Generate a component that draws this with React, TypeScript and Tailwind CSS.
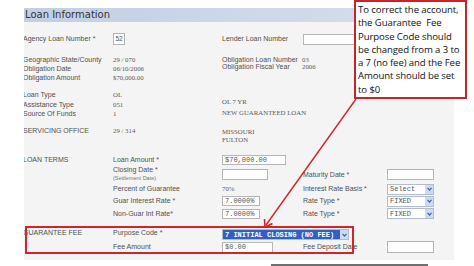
import React from "react"

// column widths, measured from the panel's left edge (x=24)
const C1 = "w-[89px] shrink-0 flex items-center"
const C2 = "w-[109px] shrink-0 flex items-center"
const C3 = "w-[80px] shrink-0 flex items-center"
const C4 = "w-[85px] shrink-0 flex items-center"

function Label({ children, className = "" }: { children: React.ReactNode; className?: string }) {
  return <span className={`text-[7px] leading-[8px] text-[#505050] whitespace-nowrap ${className}`}>{children}</span>
}

function Value({ children }: { children: React.ReactNode }) {
  return (
    <span className="font-['Liberation_Serif',serif] text-[6.8px] leading-[8px] text-[#5a5a5a] whitespace-nowrap">
      {children}
    </span>
  )
}

function Input({ value = "", w, h = "h-[11px]" }: { value?: string; w: string; h?: string }) {
  return (
    <div className={`${w} ${h} flex items-center border border-[#b5b5b5] bg-white px-[2px] font-['Liberation_Mono',monospace] text-[7px] text-[#555] whitespace-nowrap`}>
      {value}
    </div>
  )
}

function Select({ value, w, active = false }: { value: string; w: string; active?: boolean }) {
  return (
    <div className={`${w} h-[11px] flex border border-[#b3bccb] bg-white`}>
      <div
        className={`flex-1 flex items-center px-[2px] font-['Liberation_Mono',monospace] text-[7px] whitespace-nowrap overflow-hidden ${
          active ? "bg-[#3160c4] text-white font-bold" : "text-[#555]"
        }`}
      >
        {value}
      </div>
      <div className="w-[8px] flex items-center justify-center bg-[#cddbf2]">
        <svg width="5" height="4" viewBox="0 0 5 4">
          <path d="M0.5 0.8 L2.5 3 L4.5 0.8" fill="none" stroke="#3d64ad" strokeWidth="1.2" />
        </svg>
      </div>
    </div>
  )
}

export default function App() {
  return (
    <div className="relative w-[474px] h-[266px] overflow-hidden bg-white font-['Liberation_Sans',Arial,sans-serif] text-[7px] leading-[8px]">
      <div className="ml-[24px] mt-[8px] w-[430px] h-[252px] overflow-hidden bg-[#f4f4f4]">
        {/* header band */}
        <div className="h-[14px] flex items-center bg-gradient-to-r from-[#c2cfe3] to-[#d7e0ed] pl-[1px]">
          <span className="font-['DejaVu_Sans',sans-serif] text-[10px] leading-[12px] text-[#333]">Loan Information</span>
        </div>

        {/* agency / lender */}
        <div className="mt-[11px] h-[12px] flex items-center">
          <div className={C1}><Label className="-ml-px">Agency Loan Number *</Label></div>
          <div className={C2}>
            <div className="w-[12px] h-[12px] flex items-center justify-center border border-[#b5b5b5] bg-white text-[6.5px] text-[#555]">52</div>
          </div>
          <div className={C3}><Label>Lender Loan Number</Label></div>
          <div className="pl-px"><Input w="w-[90px]" /></div>
        </div>

        {/* geographic */}
        <div className="mt-[10px] flex">
          <div className="flex flex-col">
            {[
              ["Geographic State/County", "29 / 070"],
              ["Obligation Date", "06/10/2006"],
              ["Obligation Amount", "$70,000.00"],
            ].map(([l, v]) => (
              <div key={l} className="h-[9px] flex items-center">
                <div className={C1}><Label className="-ml-px">{l}</Label></div>
                <div className={C2}><Value>{v}</Value></div>
              </div>
            ))}
          </div>
          <div className="flex flex-col pt-px">
            {[
              ["Obligation Loan Number", "03"],
              ["Obligation Fiscal Year", "2006"],
            ].map(([l, v]) => (
              <div key={l} className="h-[7.5px] flex items-center">
                <div className={C3}><Label>{l}</Label></div>
                <Value>{v}</Value>
              </div>
            ))}
          </div>
        </div>

        {/* loan type */}
        <div className="mt-[8px] flex">
          <div className="flex flex-col">
            {[
              ["Loan Type", "OL"],
              ["Assistance Type", "051"],
              ["Source Of Funds", "1"],
            ].map(([l, v], i) => (
              <div key={l} className={`${i === 0 ? "h-[10px]" : "h-[9.5px]"} flex items-center`}>
                <div className={C1}><Label className="-ml-px">{l}</Label></div>
                <div className={C2}><Value>{v}</Value></div>
              </div>
            ))}
          </div>
          <div className="flex flex-col pt-[8px] gap-[3px]">
            <Value>OL 7 YR</Value>
            <Value>NEW GUARANTEED LOAN</Value>
          </div>
        </div>

        {/* servicing office */}
        <div className="mt-[8px] h-[17px] flex items-start">
          <div className={C1}><Label className="-ml-px">SERVICING OFFICE</Label></div>
          <div className={C2}><Value>29 / 314</Value></div>
          <div className="flex flex-col pt-px">
            <Value>MISSOURI</Value>
            <Value>FULTON</Value>
          </div>
        </div>

        {/* loan terms */}
        <div className="mt-[11px] h-[10px] flex items-center">
          <div className={C1}><Label className="-ml-px">LOAN TERMS</Label></div>
          <div className={C2}><Label>Loan Amount *</Label></div>
          <Input value="$70,000.00" w="w-[64px]" h="h-[10px]" />
        </div>

        <div className="mt-px h-[17px] flex items-center">
          <div className={C1} />
          <div className="w-[109px] shrink-0 self-start flex flex-col">
            <Label>Closing Date *</Label>
            <span className="text-[5.5px] leading-[8px] text-[#777] whitespace-nowrap">(Settlement Date)</span>
          </div>
          <div className={C3}><Input w="w-[46px]" /></div>
          <div className={C4}><Label className="pl-px">Maturity Date *</Label></div>
          <Input w="w-[47px]" />
        </div>

        <div className="mt-px h-[10px] flex items-center">
          <div className={C1} />
          <div className={C2}><Label>Percent of Guarantee</Label></div>
          <div className={C3}><Value>70%</Value></div>
          <div className={C4}><Label className="pl-px">Interest Rate Basis *</Label></div>
          <Select value="Select" w="w-[47px]" />
        </div>

        <div className="mt-px h-[12px] flex items-center">
          <div className={C1} />
          <div className={C2}><Label>Guar Interest Rate *</Label></div>
          <div className={C3}><Input value="7.0000%" w="w-[38px]" h="h-[10px]" /></div>
          <div className={C4}><Label className="pl-px">Rate Type *</Label></div>
          <Select value="FIXED" w="w-[47px]" />
        </div>

        <div className="mt-px h-[11px] flex items-center">
          <div className={C1} />
          <div className={C2}><Label>Non-Guar Int Rate*</Label></div>
          <div className={C3}><Input value="7.0000%" w="w-[38px]" h="h-[10px]" /></div>
          <div className={C4}><Label className="pl-px">Rate Type *</Label></div>
          <Select value="FIXED" w="w-[47px]" />
        </div>

        {/* guarantee fee */}
        <div className="mt-[10px] h-[11px] flex items-start">
          <div className={C1}><Label className="-ml-px">GUARANTEE FEE</Label></div>
          <div className={C2}><Label>Purpose Code *</Label></div>
          <Select value="7 INITIAL CLOSING (NO FEE)" w="w-[127px]" active />
        </div>

        <div className="mt-px h-[12px] flex items-center">
          <div className={C1} />
          <div className={C2}><Label>Fee Amount</Label></div>
          <div className={C3}><Input value="$0.00" w="w-[51px]" /></div>
          <div className={C4}><Label className="pl-px">Fee Deposit Date</Label></div>
          <Input w="w-[47px]" h="h-[12px]" />
        </div>
      </div>

      {/* slide scrollbar remnant */}
      <div className="ml-[271px] mt-[4px] w-[157px] h-[4px] bg-[#6f6f6f]" />

      {/* annotation: highlight box */}
      <div className="absolute left-[25px] top-[226px] w-[329px] h-[28px] border-2 border-[#d0262b]" />

      {/* annotation: callout */}
      <div className="absolute left-[354px] top-0 w-[113px] h-[99px] border-2 border-[#c8232b] bg-white pl-[2px] pt-px">
        <p className="font-['Open_Sans',sans-serif] text-[9.6px] leading-[13.3px] text-[#111] whitespace-nowrap tracking-[-0.1px]">
          To correct the account,
          <br />
          the Guarantee&nbsp; Fee
          <br />
          Purpose Code should
          <br />
          be changed from a 3 to
          <br />
          a 7 (no fee) and the Fee
          <br />
          Amount should be set
          <br />
          to $0
        </p>
      </div>

      {/* annotation: arrow */}
      <svg className="absolute left-0 top-0 pointer-events-none" width="474" height="266" viewBox="0 0 474 266">
        <line x1="356" y1="99" x2="266" y2="225" stroke="#d0262b" strokeWidth="1.4" />
        <polyline points="264.5,219 265,227 272.5,223.5" fill="none" stroke="#d0262b" strokeWidth="1.6" />
      </svg>
    </div>
  )
}
